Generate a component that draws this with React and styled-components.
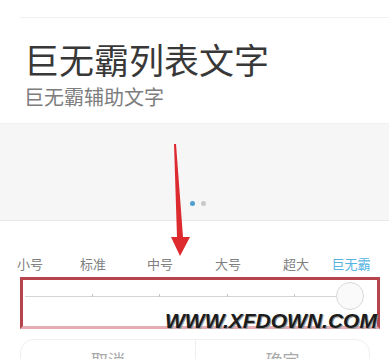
import React from "react";
import styled, { createGlobalStyle } from "styled-components";

const GlobalStyle = createGlobalStyle`
  html, body {
    margin: 0;
    padding: 0;
    background: #fff;
  }
  body {
    width: 389px;
    height: 359px;
    overflow: hidden;
    font-family: "Noto Sans CJK SC", "Noto Sans", sans-serif;
  }
`;

const Page = styled.div`
  position: relative;
  width: 389px;
  height: 359px;
  overflow: hidden;
  background: #fff;
`;

const TopRule = styled.div`
  margin: 17px 0 0 20px;
  height: 1px;
  background: #f1f1f1;
`;

const Header = styled.div`
  padding: 20px 0 0 24px;
`;

const Title = styled.div`
  font-size: 35px;
  line-height: 42px;
  color: #383838;
  white-space: nowrap;
`;

const Subtitle = styled.div`
  margin-top: 5px;
  font-size: 20px;
  line-height: 24px;
  color: #7d7d7d;
  white-space: nowrap;
`;

const Preview = styled.div`
  margin-top: 14px;
  height: 98px;
  box-sizing: border-box;
  background: #f6f6f6;
  border-top: 1px solid #f1f1f1;
  border-bottom: 1px solid #e9e9e9;
  display: flex;
  align-items: flex-end;
  justify-content: center;
  gap: 6px;
  padding: 0 0 14px 6px;
`;

const Dot = styled.span`
  width: 5px;
  height: 5px;
  border-radius: 50%;
  background: ${(p) => (p.$active ? "#4d9fcf" : "#c9c9c9")};
`;

const Labels = styled.div`
  margin-top: 36px;
  display: grid;
  grid-template-columns: 60px 66px 68px 68px 68px 42px;
  justify-items: center;
`;

const Label = styled.span`
  font-size: 13px;
  line-height: 13px;
  color: ${(p) => (p.$active ? "#56b4e3" : "#808080")};
  white-space: nowrap;
`;

const Slider = styled.div`
  margin: 12px 0 0 25px;
  width: 339px;
  height: 28px;
  display: flex;
  align-items: center;
`;

const Segment = styled.div`
  position: relative;
  height: 1px;
  background: #d4d4d4;
  width: ${(p) => (p.$last ? "auto" : "67.5px")};
  flex: ${(p) => (p.$last ? "1" : "none")};
  &::after {
    content: "";
    display: ${(p) => (p.$last ? "none" : "block")};
    position: absolute;
    right: 0;
    top: -2px;
    width: 1px;
    height: 3px;
    background: #c4c4c4;
  }
`;

const Knob = styled.div`
  width: 26px;
  height: 26px;
  border-radius: 50%;
  background: #fafafa;
  border: 1px solid #d9d9d9;
  flex: none;
`;

const Buttons = styled.div`
  margin: 29px 19px 0 20px;
  height: 50px;
  box-sizing: border-box;
  border: 1px solid #efefef;
  border-radius: 14px;
  display: grid;
  grid-template-columns: 1fr 1fr;
`;

const Action = styled.div`
  padding-top: 11px;
  text-align: center;
  font-size: 17px;
  line-height: 17px;
  color: #a8a8a8;
  & + & {
    border-left: 1px solid #efefef;
  }
`;

const HighlightBox = styled.div`
  position: absolute;
  left: 20px;
  top: 277px;
  width: 360px;
  height: 52px;
  box-sizing: border-box;
  border: 3px solid #b7444d;
  border-bottom-color: #e5aeb5;
`;

const Arrow = styled.svg`
  position: absolute;
  left: 0;
  top: 0;
  width: 389px;
  height: 359px;
  pointer-events: none;
`;

const Watermark = styled.div`
  position: absolute;
  left: 165px;
  top: 310px;
  font-family: "Liberation Sans", Arial, sans-serif;
  font-style: italic;
  font-weight: bold;
  font-size: 21px;
  line-height: 1;
  color: #1c1c1c;
  text-shadow: 1px 1px 0 #9a9a9a;
  white-space: nowrap;
`;

const sizes = ["小号", "标准", "中号", "大号", "超大", "巨无霸"];

const App = () => {
  return (
    <Page>
      <GlobalStyle />
      <TopRule />
      <Header>
        <Title>巨无霸列表文字</Title>
        <Subtitle>巨无霸辅助文字</Subtitle>
      </Header>

      <Preview>
        <Dot $active />
        <Dot />
      </Preview>

      <Labels>
        {sizes.map((s, i) => (
          <Label key={s} $active={i === sizes.length - 1}>
            {s}
          </Label>
        ))}
      </Labels>

      <Slider>
        <Segment />
        <Segment />
        <Segment />
        <Segment />
        <Segment $last />
        <Knob />
      </Slider>

      <Buttons>
        <Action>取消</Action>
        <Action>确定</Action>
      </Buttons>

      <HighlightBox />
      <Arrow viewBox="0 0 389 359">
        <polygon
          points="174,144 176,144 183,237 190,237 180,256 171,237 177,237"
          fill="#dc2a2e"
        />
      </Arrow>
      <Watermark>WWW.XFDOWN.COM</Watermark>
    </Page>
  );
};

export default App;
